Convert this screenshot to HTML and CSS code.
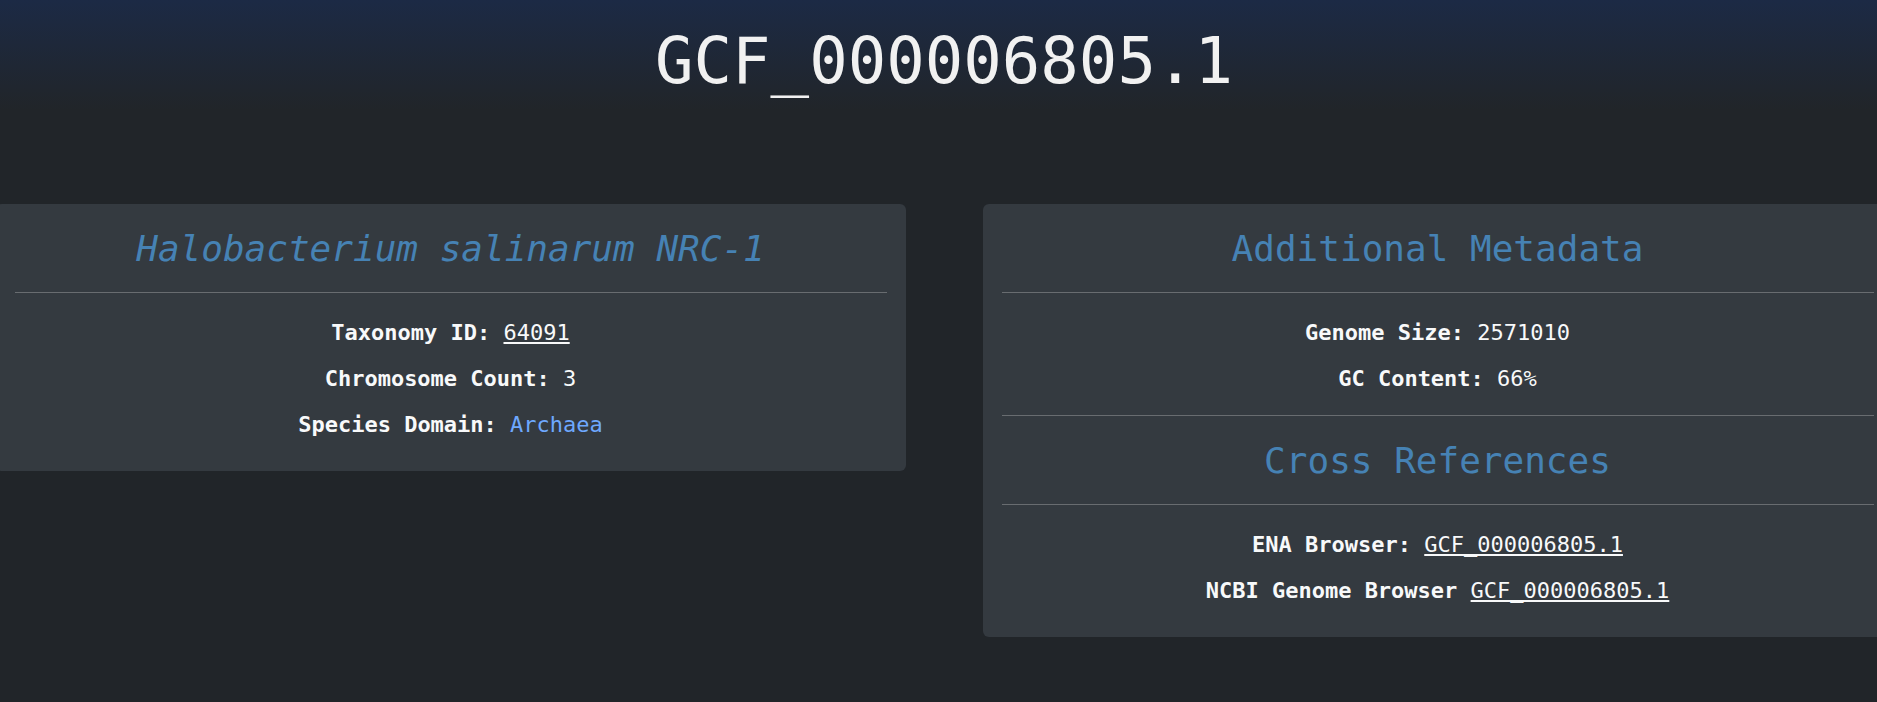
FILE: index.html
```html
<!DOCTYPE html>
<html lang="en">
<head>
    <meta charset="UTF-8">
    <meta name="viewport" content="width=device-width, initial-scale=1.0">
    <title>GCF_000006805.1</title>
    <link rel="stylesheet" href="styles.css">
</head>
<body>
    <div class="page">
        <header class="top">
            <h1>GCF_000006805.1</h1>
        </header>

        <div class="row">
            <div class="card">
                <div class="section">
                    <h2 class="species">Halobacterium salinarum NRC-1</h2>
                    <hr>
                    <div class="fields">
                        <p><strong>Taxonomy ID:</strong> <a class="plain" href="#">64091</a></p>
                        <p><strong>Chromosome Count:</strong> 3</p>
                        <p><strong>Species Domain:</strong> <span class="domain">Archaea</span></p>
                    </div>
                </div>
            </div>

            <div class="card">
                <div class="section">
                    <h2>Additional Metadata</h2>
                    <hr>
                    <div class="fields">
                        <p><strong>Genome Size:</strong> 2571010</p>
                        <p><strong>GC Content:</strong> 66%</p>
                    </div>
                </div>
                <hr>
                <div class="section">
                    <h2>Cross References</h2>
                    <hr>
                    <div class="fields">
                        <p><strong>ENA Browser:</strong> <a class="plain" href="#">GCF_000006805.1</a></p>
                        <p><strong>NCBI Genome Browser</strong> <a class="plain" href="#">GCF_000006805.1</a></p>
                    </div>
                </div>
            </div>
        </div>
    </div>
</body>
</html>
```

FILE: styles.css
```css
html, body { margin: 0; padding: 0; background: #212529; overflow: hidden; }
body { font-family: "DejaVu Sans Mono", "Liberation Mono", monospace; color: #f8f9fa; }
.page { width: 1888px; }
.top { background: linear-gradient(to bottom, #1c2a45 0%, #212529 100%); padding: 23px 0 10px; text-align: center; }
.top h1 { margin: 0; font-size: 64px; line-height: 77px; font-weight: normal; color: #f1f1f1; }
.row { display: flex; align-items: flex-start; justify-content: center; gap: 77px; margin-top: 94px; }
.card { flex: 0 0 910px; box-sizing: border-box; background: #343a40; border-radius: 6px; padding: 0 19px 10px; text-align: center; }
.section { padding-top: 23px; }
.section h2 { margin: 0 0 22px; font-size: 36px; line-height: 43px; font-weight: normal; color: #4682b4; }
.section h2.species { font-style: italic; }
hr { margin: 0; border: 0; border-top: 1px solid #686c70; }
.fields { padding: 25px 0 5px; }
.fields p { margin: 0 0 16px; font-size: 22px; line-height: 30px; }
.fields strong { font-weight: bold; color: #f8f9fa; }
a.plain { color: #f8f9fa; text-decoration: underline; text-decoration-skip-ink: none; }
.domain { color: #6ea8fe; }
```
